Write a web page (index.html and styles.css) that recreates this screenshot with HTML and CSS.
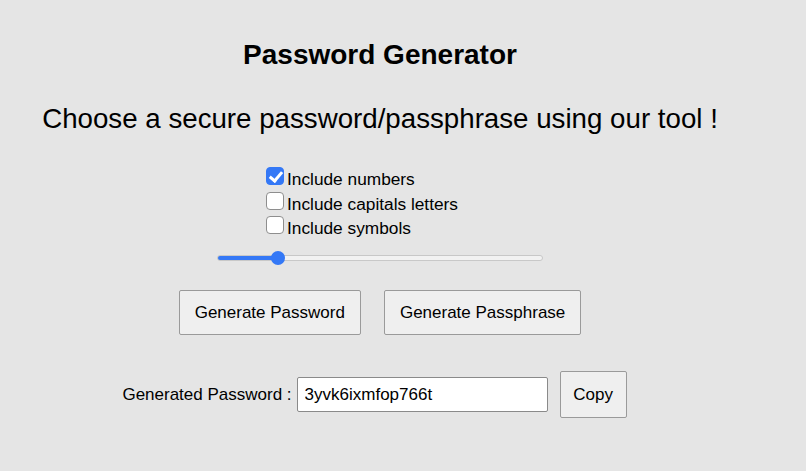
FILE: index.html
```html
<!DOCTYPE html>
<html lang="en">
<head>
<meta charset="utf-8">
<title>Password Generator</title>
<link rel="stylesheet" href="styles.css">
</head>
<body>
<main class="app">
  <h1 class="title">Password Generator</h1>
  <h2 class="subtitle">Choose a secure password/passphrase using our tool !</h2>

  <div class="options">
    <label class="option"><input type="checkbox" class="check" checked><span>Include numbers</span></label>
    <label class="option"><input type="checkbox" class="check"><span>Include capitals letters</span></label>
    <label class="option"><input type="checkbox" class="check"><span>Include symbols</span></label>
  </div>

  <input type="range" class="length" min="0" max="100" value="17">

  <div class="actions">
    <button class="btn btn-main">Generate Password</button>
    <button class="btn btn-main">Generate Passphrase</button>
  </div>

  <div class="result">
    <label class="result-label" for="out">Generated Password :</label>
    <input id="out" class="output" type="text" value="3yvk6ixmfop766t">
    <button class="btn btn-copy">Copy</button>
  </div>
</main>
</body>
</html>
```

FILE: styles.css
```css
* { box-sizing: border-box; }

html, body {
  margin: 0;
  background: #e5e5e5;
}

body {
  font-family: "Liberation Sans", Arial, sans-serif;
  color: #000;
  height: 471px;
  overflow: hidden;
}

.app {
  width: 760px;
  display: flex;
  flex-direction: column;
  align-items: center;
}

.title {
  margin: 39px 0 0;
  font-size: 28px;
  line-height: 32px;
  font-weight: 700;
}

.subtitle {
  margin: 32px 0 0;
  font-size: 27.7px;
  line-height: 32px;
  font-weight: 400;
}

.options {
  width: 228px;
  margin-top: 32px;
  display: flex;
  flex-direction: column;
}

.option {
  display: flex;
  align-items: flex-start;
  font-size: 17.3px;
  line-height: 24.5px;
  white-space: nowrap;
}

.check {
  appearance: none;
  -webkit-appearance: none;
  width: 18px;
  height: 18px;
  margin: 0 3px 0 0;
  border: 1px solid #8e8e8e;
  border-radius: 4px;
  background: #fff;
  position: relative;
  flex: none;
}

.check:checked {
  background: #3478f6;
  border-color: #3478f6;
}

.check:checked::after {
  content: "";
  position: absolute;
  left: 5px;
  top: 1px;
  width: 5px;
  height: 10px;
  border: solid #fff;
  border-width: 0 3px 3px 0;
  transform: rotate(40deg);
}

.length {
  -webkit-appearance: none;
  appearance: none;
  width: 326px;
  height: 16px;
  margin: 9.5px 0 0;
  padding: 0;
  background: transparent;
}

.length::-webkit-slider-runnable-track {
  height: 6px;
  border-radius: 3px;
  border: 1px solid #c8c8c8;
  background: linear-gradient(to right, #3478f6 0, #3478f6 58px, #f2f2f2 58px);
}

.length::-webkit-slider-thumb {
  -webkit-appearance: none;
  width: 14px;
  height: 14px;
  margin-top: -5px;
  border-radius: 50%;
  background: #3478f6;
  border: none;
}

.actions {
  margin-top: 24px;
  display: flex;
  gap: 23px;
}

.btn {
  font-family: "Liberation Sans", Arial, sans-serif;
  font-size: 17px;
  color: #000;
  background: #efefef;
  border: 1px solid #9a9a9a;
  border-radius: 2px;
}

.btn-main {
  height: 45px;
  padding: 0 15px;
}

.result {
  margin-top: 36px;
  padding-right: 11px;
  display: flex;
  align-items: center;
}

.result-label {
  font-size: 17px;
  margin-right: 5px;
}

.output {
  width: 251px;
  height: 35px;
  padding: 0 7px;
  font-family: "Liberation Sans", Arial, sans-serif;
  font-size: 17px;
  color: #000;
  background: #fff;
  border: 1px solid #8a8a8a;
  border-radius: 2px;
  margin-right: 12px;
}

.btn-copy {
  height: 47px;
  width: 67px;
  padding: 0;
}
```
